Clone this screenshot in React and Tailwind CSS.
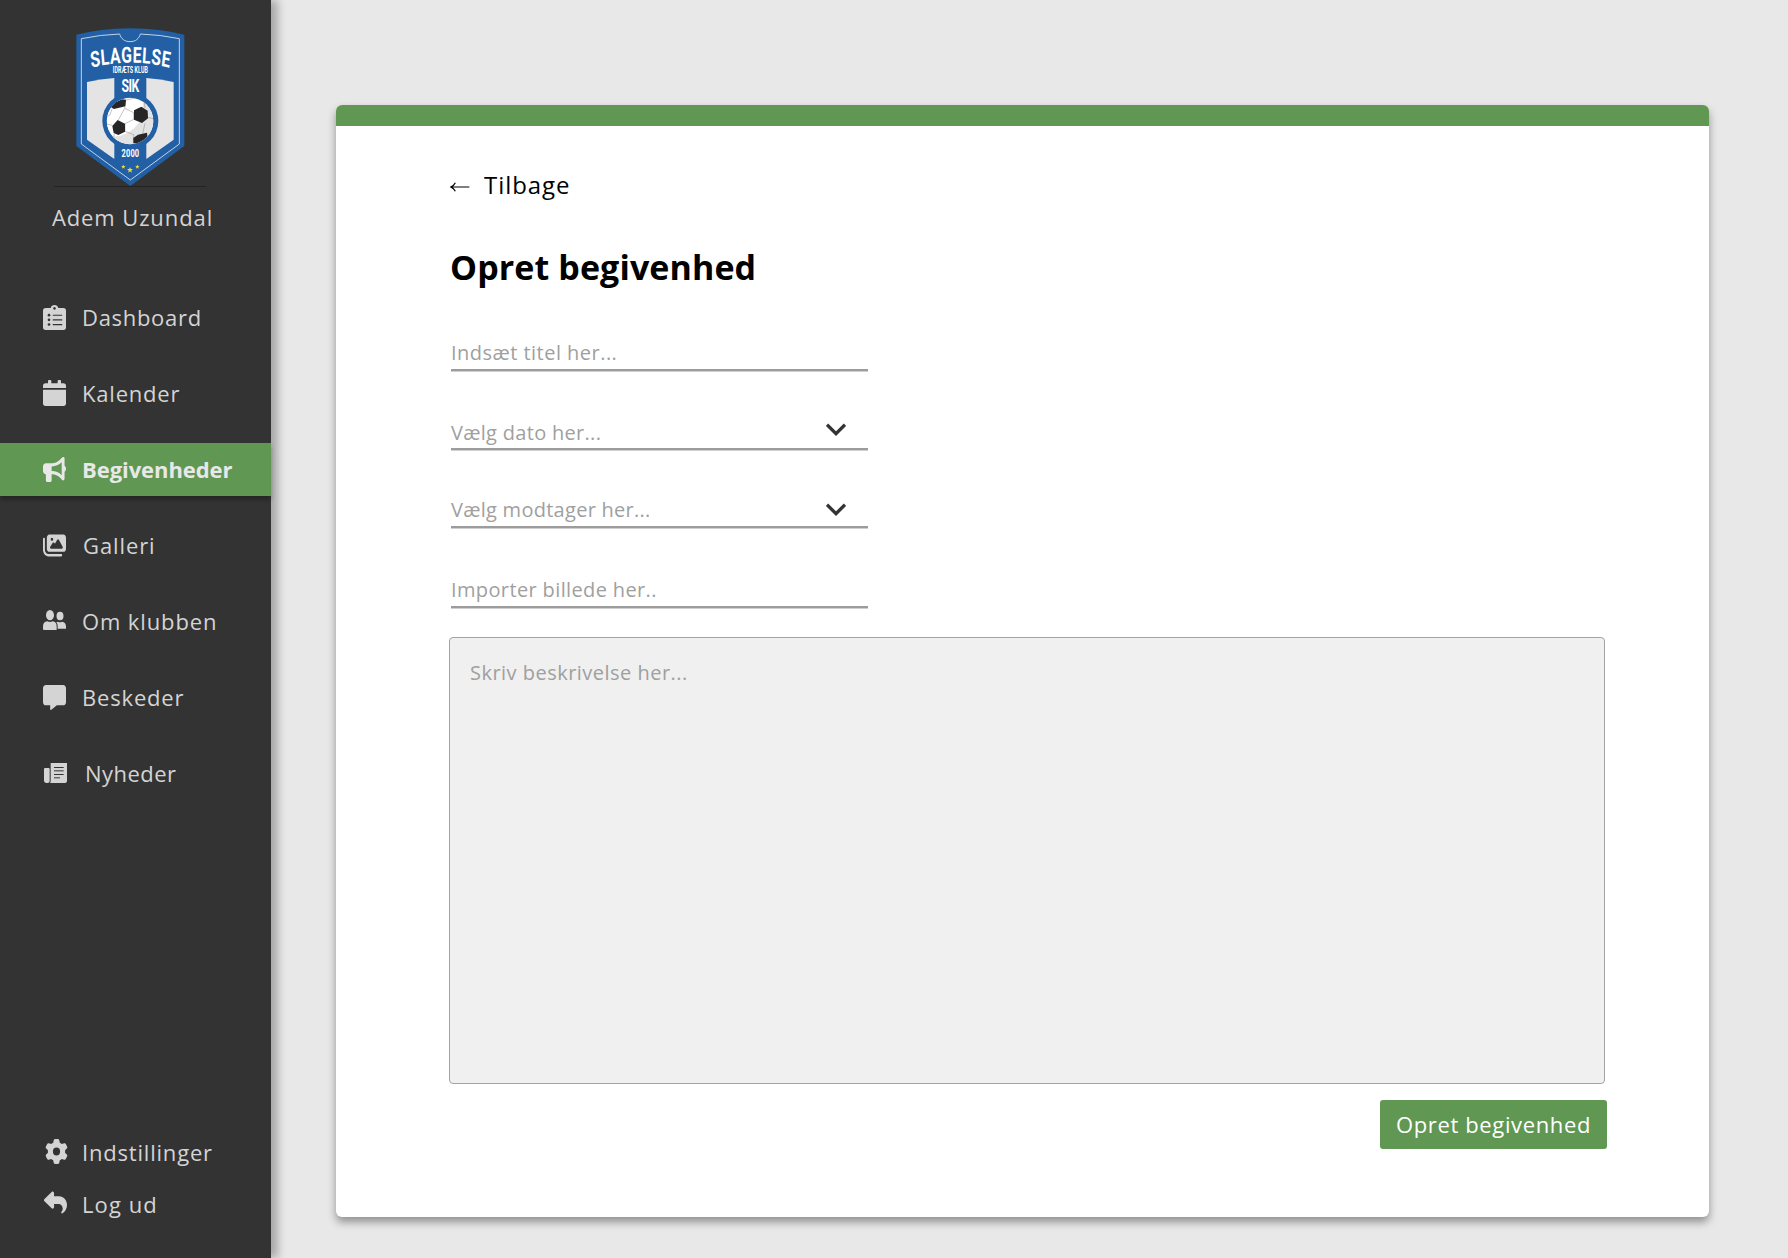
import React from "react";
import { FaBullhorn, FaImages, FaMessage, FaGear, FaReply } from "react-icons/fa6";

function ClubLogo() {
  return (
    <svg className="block h-[159px] w-[109px]" viewBox="77 54 327 477" aria-label="Slagelse Idræts Klub">
      <path d="M78 74Q150 56 240 55Q330 56 402 74V408L240 528L78 408Z" fill="#225fa5" />
      <path
        d="M93 86Q150 74 208 72C212 86 222 95 239 95C256 95 266 86 270 72Q330 74 387 86V402L240 510L93 402Z"
        fill="none"
        stroke="#c3d3e6"
        strokeWidth="3"
      />
      <path d="M110 216Q150 207 192 204V447L110 389Z" fill="#e4e4e5" />
      <path d="M288 204Q330 207 370 216V389L288 447Z" fill="#e4e4e5" />
      <circle cx="240" cy="333" r="84" fill="#225fa5" />
      <clipPath id="ball">
        <circle cx="239" cy="333" r="70" />
      </clipPath>
      <g clipPath="url(#ball)">
        <circle cx="239" cy="333" r="71" fill="#fff" />
        <path d="M277 272Q282 330 251 355Q215 386 178 378L200 410H320V280Z" fill="#e2e2e2" />
        <g stroke="#8b8b8b" strokeWidth="1.5" fill="none">
          <path d="M223 295L250 308M223 295L204 330M224 341L250 328M224 364L250 374M186 295L178 316L165 322M226 270L256 264L282 275L284 294M292 322L308 326M284 340L277 371M250 374L249 392M192 372L188 392" />
          <path d="M223 295L226 270M250 308V328M224 341V364M186 346L170 342" />
        </g>
        <g fill="#262626">
          <path d="M196 277L215 268L227 269L225 289L191 297L180 290Z" />
          <path d="M251 301L273 290L292 302L293 325L275 339L251 329Z" />
          <path d="M186 348L202 330L224 341V365L204 375L190 369Z" />
          <path d="M249 384L263 374L290 368L292 385L275 405L249 400Z" />
        </g>
      </g>
      <defs>
        <path id="arch" d="M167 174Q333 142 500 174" />
      </defs>
      <g fill="#fff" fontFamily="Roboto, sans-serif" fontWeight="700" textAnchor="middle">
        <g transform="scale(0.72 1)">
          <text fontSize="66">
            <textPath href="#arch" startOffset="50%" textLength="328" lengthAdjust="spacing">SLAGELSE</textPath>
          </text>
        </g>
        <text transform="translate(240 188) scale(0.62 1)" fontSize="26" textLength="170" lengthAdjust="spacing">IDRÆTS KLUB</text>
        <text transform="translate(240 246) scale(0.68 1)" fontSize="54" textLength="79" lengthAdjust="spacing">SIK</text>
        <text transform="translate(240 441) scale(0.66 1)" fontSize="34" textLength="80" lengthAdjust="spacing">2000</text>
      </g>
      <g fill="#ecdc3c">
        <path transform="translate(239 480)" d="M0-9L2.4-3H9L3.8 1.2L5.6 8L0 4L-5.6 8L-3.8 1.2L-9-3H-2.4Z" />
        <path transform="translate(219 470) scale(0.75)" d="M0-9L2.4-3H9L3.8 1.2L5.6 8L0 4L-5.6 8L-3.8 1.2L-9-3H-2.4Z" />
        <path transform="translate(261 470) scale(0.75)" d="M0-9L2.4-3H9L3.8 1.2L5.6 8L0 4L-5.6 8L-3.8 1.2L-9-3H-2.4Z" />
      </g>
    </svg>
  );
}

function ClipboardIcon() {
  return (
    <svg className="h-[25px] w-[23px]" viewBox="0 0 69 75" fill="currentColor">
      <path
        fillRule="evenodd"
        d="M8 9H23C24 3 29 0 34.500 0S45 3 46 9H61Q69 9 69 17V67Q69 75 61 75H8Q0 75 0 67V17Q0 9 8 9ZM34.500 6a4 4 0 1 0 .01 0Z"
      />
      <g fill="#333">
        <circle cx="18" cy="30.500" r="4" />
        <circle cx="18" cy="44.500" r="4" />
        <circle cx="18" cy="58.500" r="4" />
        <rect x="29" y="29" width="29" height="3.500" rx="1.500" />
        <rect x="29" y="43" width="29" height="3.500" rx="1.500" />
        <rect x="29" y="57" width="29" height="3.500" rx="1.500" />
      </g>
    </svg>
  );
}

function CalendarIcon() {
  return (
    <svg className="h-[26px] w-[23px]" viewBox="0 0 69 78" fill="currentColor">
      <path d="M0 24V18Q0 10 8 10H15V3Q15 0 18 0H22Q25 0 25 3V10H44V3Q44 0 47 0H51Q54 0 54 3V10H61Q69 10 69 18V24Z" />
      <path d="M0 29H69V70Q69 78 61 78H8Q0 78 0 70Z" />
    </svg>
  );
}

function PeopleIcon() {
  return (
    <svg className="h-[20px] w-[23px]" viewBox="0 0 69 60" fill="currentColor">
      <ellipse cx="21" cy="15.500" rx="12" ry="15.500" />
      <path d="M0 56V50Q0 35 13 34Q21 38 29 34Q41 35 41 50V60H3Q0 60 0 56Z" />
      <ellipse cx="51" cy="18" rx="10.500" ry="13" />
      <path d="M40 37Q42 35 45 35Q51 38 57 35Q69 37 69 50V56H44V47Q44 41 40 37Z" />
    </svg>
  );
}

function NewspaperIcon() {
  return (
    <svg className="ml-px h-[20px] w-[23px]" viewBox="0 0 69 60" fill="currentColor">
      <path d="M0 18Q0 15 3 15H14Q17 15 17 18V54Q17 60 8 60Q0 60 0 52Z" />
      <path d="M20 0H69V54Q69 60 63 60H18Q20 58 20 54Z" />
      <g fill="#333">
        <rect x="30" y="12" width="29" height="3" />
        <rect x="30" y="22" width="29" height="3" />
        <rect x="30" y="33" width="29" height="3" />
        <rect x="30" y="43" width="18" height="3" />
      </g>
    </svg>
  );
}

const stretch = { preserveAspectRatio: "none" };

const navItems = [
  { label: "Dashboard", icon: <ClipboardIcon />, text: "tracking-[0.7px]" },
  { label: "Kalender", icon: <CalendarIcon />, text: "tracking-[0.8px]" },
  { label: "Begivenheder", icon: <FaBullhorn {...stretch} className="h-[25px] w-[23px]" />, text: "tracking-[-0.07px] font-bold", active: true },
  { label: "Galleri", icon: <FaImages {...stretch} className="h-[25px] w-[23px]" />, text: "ml-px tracking-[0.9px]" },
  { label: "Om klubben", icon: <PeopleIcon />, text: "tracking-[0.88px]", lift: true },
  { label: "Beskeder", icon: <FaMessage {...stretch} className="h-[25px] w-[23px]" />, text: "tracking-[0.82px]" },
  { label: "Nyheder", icon: <NewspaperIcon />, text: "ml-[3px] tracking-[0.47px]" },
];

function Sidebar() {
  return (
    <aside className="z-10 flex h-full w-[271px] shrink-0 flex-col bg-[#333] text-[22px] leading-[30px] text-[#d4d4d4] shadow-[7px_0_8px_rgba(0,0,0,0.27)]">
      <div className="flex flex-col items-center pt-[28px] pr-[11px]">
        <ClubLogo />
        <div className="-mt-px h-px w-[152px] bg-[#232323]" />
        <p className="mt-[15px] ml-[5px] whitespace-nowrap tracking-[0.9px]">Adem Uzundal</p>
      </div>
      <nav className="mt-[59px] flex flex-col gap-[23px]">
        {navItems.map((item) => (
          <a
            key={item.label}
            className={
              item.active
                ? "flex h-[53px] items-center bg-[#5f9753] pl-[43px] text-[#e8e8e8] shadow-[0_4px_4px_rgba(0,0,0,0.25)]"
                : "flex h-[53px] items-center pl-[43px]"
            }
          >
            <span className={item.lift ? "-mt-[3px] flex w-[39px]" : "-mt-px flex w-[39px]"}>{item.icon}</span>
            <span className={`-mt-[2px] whitespace-nowrap ${item.text}`}>{item.label}</span>
          </a>
        ))}
      </nav>
      <div className="mt-auto flex flex-col gap-[22px] pb-[39px]">
        <a className="flex items-center pl-[45px]">
          <FaGear {...stretch} className="-mt-px mr-[14px] h-[25px] w-[23px]" />
          <span className="tracking-[0.8px]">Indstillinger</span>
        </a>
        <a className="flex items-center pl-[44px]">
          <FaReply {...stretch} className="-mt-[3px] mr-[15px] h-[25px] w-[23px]" />
          <span className="tracking-[1.1px]">Log ud</span>
        </a>
      </div>
    </aside>
  );
}

function Chevron({ className }) {
  return (
    <svg className={className} width="20" height="13" viewBox="0 0 60 39" fill="none">
      <path d="M3 5L30 32L57 5" stroke="#333" strokeWidth="10" />
    </svg>
  );
}

function Field({ label, className, chevron }) {
  return (
    <div
      className={`flex w-[417px] items-end justify-between border-b-[2px] border-[#9c9c9c] shadow-[0_1px_0_#d0d0d0] ${className}`}
    >
      <span className="whitespace-nowrap">{label}</span>
      {chevron}
    </div>
  );
}

export default function App() {
  return (
    <div className="flex h-[1258px] w-[1788px] overflow-hidden bg-[#e8e8e8] font-['Open_Sans',sans-serif]">
      <Sidebar />
      <main className="flex-1 pt-[105px] pl-[65px]">
        <section className="flex h-[1112px] w-[1373px] flex-col overflow-hidden rounded-[6px] bg-white shadow-[0_5px_8px_rgba(0,0,0,0.38)]">
          <div className="h-[21px] shrink-0 bg-[#5f9753]" />
          <div className="flex flex-col pt-[43px] pl-[113px]">
            <a className="flex h-[32px] items-center text-2xl tracking-[0.93px] text-black">
              <svg className="mt-[3px] ml-[1px] h-[10px] w-[20px]" viewBox="0 0 60 30" fill="none" stroke="#000" strokeWidth="3.5">
                <path d="M58 15H2M16 2Q12 11 2 15Q12 19 16 28" />
              </svg>
              <span className="ml-[14px]">Tilbage</span>
            </a>
            <h1 className="mt-[43px] ml-px text-[34px] leading-[46px] font-bold tracking-[0.1px] text-black">Opret begivenhed</h1>
            <form className="flex flex-col pl-[2px] text-[20px] leading-[28px] text-[#9f9f9f]">
              <Field label="Indsæt titel her..." className="mt-[50px] h-[31px] pb-[2px] tracking-[0.47px]" />
              <Field
                label="Vælg dato her..."
                className="h-[79px] pb-px tracking-[0.3px]"
                chevron={<Chevron className="mr-[22px] mb-[11px]" />}
              />
              <Field
                label="Vælg modtager her..."
                className="h-[78px] pb-[2px] tracking-[0.27px]"
                chevron={<Chevron className="mr-[22px] mb-[8px]" />}
              />
              <Field label="Importer billede her.." className="h-[80px] pb-[2px] tracking-[0.37px]" />
              <div className="mt-[29px] -ml-[2px] h-[447px] w-[1156px] rounded-[4px] border border-[#a3a3a3] bg-[#f0f0f0] pt-[21px] pl-[20px] tracking-[0.48px]">
                Skriv beskrivelse her...
              </div>
              <button
                type="button"
                className="mt-[16px] ml-[929px] h-[49px] w-[227px] rounded-[3px] bg-[#5f9753] pb-[2px] text-[22px] tracking-[0.63px] whitespace-nowrap text-white"
              >
                Opret begivenhed
              </button>
            </form>
          </div>
        </section>
      </main>
    </div>
  );
}
